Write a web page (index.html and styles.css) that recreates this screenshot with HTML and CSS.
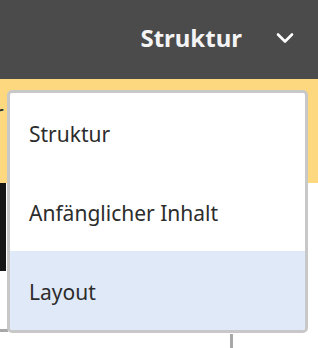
FILE: index.html
```html
<!DOCTYPE html>
<html lang="de">
<head>
    <meta charset="UTF-8">
    <meta name="viewport" content="width=device-width, initial-scale=1.0">
    <title>Struktur</title>
    <link rel="stylesheet" href="styles.css">
</head>
<body>
    <div class="page">
        <div class="topbar">
            <span class="mode-title">Struktur</span>
            <svg class="chevron" width="18" height="12" viewBox="0 0 18 12">
                <path d="M2 2.5 L9 9.5 L16 2.5" fill="none" stroke="#ffffff" stroke-width="2.6" stroke-linecap="round" stroke-linejoin="round"/>
            </svg>
        </div>

        <div class="notice">
            <span class="notice-text">r</span>
        </div>

        <div class="workspace">
            <div class="rail"></div>
            <div class="rail-gap"></div>
            <div class="rail-line"></div>
            <div class="canvas-line"></div>
        </div>

        <ul class="mode-menu">
            <li class="mode-item">Struktur</li>
            <li class="mode-item">Anfänglicher Inhalt</li>
            <li class="mode-item selected">Layout</li>
        </ul>
    </div>
</body>
</html>
```

FILE: styles.css
```css
body{
    margin: 0;
    font-family: "Noto Sans", "Open Sans", sans-serif;
    background: #ffffff;
}
.page{
    position: relative;
    width: 318px;
    height: 348px;
    overflow: hidden;
}
.topbar{
    height: 79px;
    background: #4b4b4b;
    display: flex;
    align-items: center;
    justify-content: flex-end;
    padding-right: 24px;
    gap: 34px;
}
.mode-title{
    color: #f4f4f4;
    font-weight: 700;
    font-size: 24px;
    margin-top: -4px;
}
.chevron{
    display: block;
    margin-top: -4px;
}
.notice{
    height: 104px;
    background: #fdd87f;
}
.notice-text{
    display: inline-block;
    margin-left: -5px;
    margin-top: 20px;
    font-size: 21px;
    color: #2c2c2c;
}
.workspace{
    position: relative;
    height: 165px;
}
.rail{
    width: 6px;
    height: 88px;
    background: #161616;
}
.rail-gap{
    height: 58px;
}
.rail-line{
    width: 8px;
    height: 3px;
    background: #a8a8a8;
}
.canvas-line{
    margin: 2px 0 0 230px;
    width: 3px;
    height: 20px;
    background: #a8a8a8;
}
.mode-menu{
    position: absolute;
    top: 90px;
    left: 7px;
    width: 295px;
    margin: 0;
    padding: 0;
    list-style: none;
    background: #ffffff;
    border: 3px solid #c8c8c8;
    border-radius: 5px;
    overflow: hidden;
}
.mode-item{
    height: 79px;
    display: flex;
    align-items: center;
    padding-left: 19px;
    padding-top: 2px;
    box-sizing: border-box;
    font-size: 21px;
    color: #2c2c2c;
}
.mode-item.selected{
    background: #e0e9f7;
}
```
